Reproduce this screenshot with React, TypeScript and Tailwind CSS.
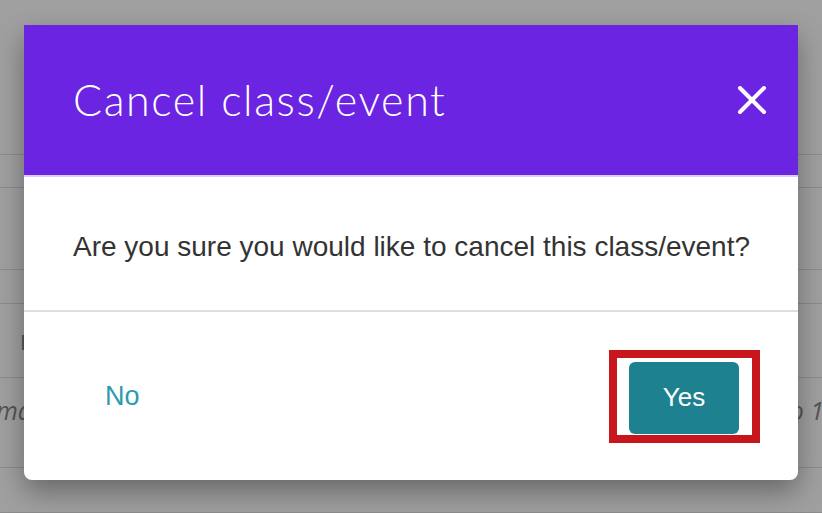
// Rows of the page sitting behind the modal backdrop
const rows = [
  { h: 'h-[155px]', content: null },
  { h: 'h-[33px]', content: null },
  { h: 'h-[82px]', content: null },
  { h: 'h-[34px]', content: null },
  { h: 'h-[74px]', content: 'name' },
  { h: 'h-[90px]', content: 'italic' },
  { h: 'h-[45px]', content: null },
];

function BackgroundList() {
  return (
    <div className="flex flex-col bg-[#a0a0a0]">
      {rows.map((row, i) => (
        <div
          key={i}
          className={`${row.h} relative border-b border-[#8c8c8c] flex items-start justify-between overflow-hidden`}
        >
          {row.content === 'name' && (
            <span className="ml-[20px] mt-[22px] text-[22px] text-[#555]" style={{ fontFamily: '"Liberation Sans", sans-serif' }}>
              I
            </span>
          )}
          {row.content === 'italic' && (
            <>
              <span className="-ml-[4px] mt-[14px] italic text-[25px] text-[#555]" style={{ fontFamily: '"Open Sans", sans-serif' }}>
                ma
              </span>
              <span className="-mr-[2px] mt-[14px] italic text-[25px] text-[#555]" style={{ fontFamily: '"Open Sans", sans-serif' }}>
                o 1
              </span>
            </>
          )}
        </div>
      ))}
    </div>
  );
}

function CloseIcon() {
  return (
    <svg width="30" height="30" viewBox="0 0 30 30" fill="none" stroke="currentColor" strokeWidth="4" strokeLinecap="round">
      <path d="M3 3 L27 27" />
      <path d="M27 3 L3 27" />
    </svg>
  );
}

export default function App() {
  return (
    <div className="relative w-[822px] h-[513px] overflow-hidden bg-[#a0a0a0]">
      <BackgroundList />

      {/* Cancel dialog */}
      <div className="absolute left-[24px] top-[25px] w-[774px] flex flex-col bg-white rounded-b-[8px] shadow-[0_12px_28px_rgba(0,0,0,0.35)]">
        <div className="h-[152px] bg-[#6b24e1] border-b-2 border-[#dccbfa] flex items-center justify-between pl-[49px] pr-[31px]">
          <h2 className="text-[43px] font-light text-white tracking-[1.6px]" style={{ fontFamily: 'Lato, sans-serif' }}>
            Cancel class/event
          </h2>
          <button className="text-white">
            <CloseIcon />
          </button>
        </div>

        <div className="h-[135px] flex items-center pl-[49px] pt-[6px] border-b-2 border-[#dedede]">
          <p className="text-[28px] text-[#333]" style={{ fontFamily: '"Liberation Sans", sans-serif' }}>
            Are you sure you would like to cancel this class/event?
          </p>
        </div>

        <div
          className="h-[168px] flex items-center justify-between pl-[81px] pr-[38px]"
          style={{ fontFamily: '"Liberation Sans", sans-serif' }}
        >
          <button className="text-[27px] text-[#2b9bb0]">No</button>
          <div className="border-8 border-[#c8161d] pl-[12px] pr-[13px] pt-[4px] pb-[1px]">
            <button className="w-[110px] h-[72px] rounded-[6px] bg-[#1e8190] text-white text-[26px]">Yes</button>
          </div>
        </div>
      </div>
    </div>
  );
}
